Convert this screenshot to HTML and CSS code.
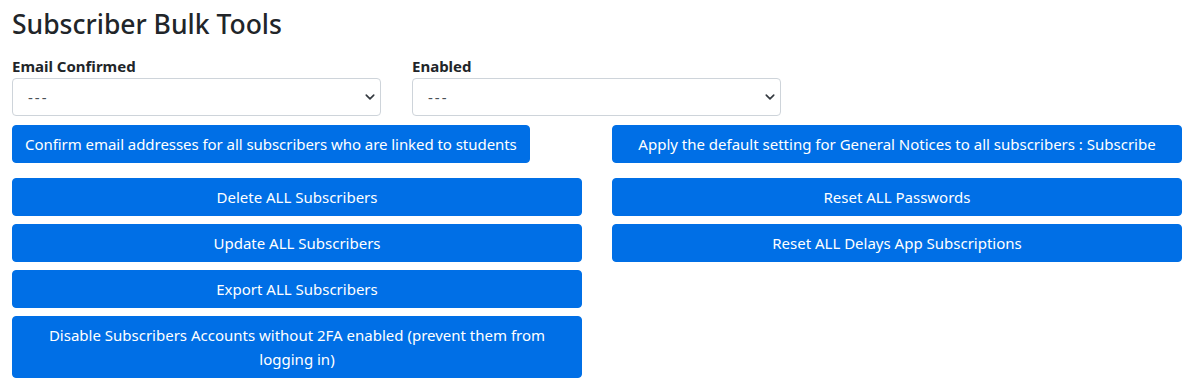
FILE: index.html
```html
<!DOCTYPE html>
<html lang="en">
<head>
    <meta charset="UTF-8">
    <title>Subscriber Bulk Tools</title>
    <link rel="stylesheet" href="styles.css">
</head>
<body>
    <div class="page">
        <h3 class="page-title">Subscriber Bulk Tools</h3>

        <div class="filters">
            <div class="field">
                <label for="email-confirmed">Email Confirmed</label>
                <div class="select-wrap">
                    <select id="email-confirmed" class="form-select">
                        <option>---</option>
                    </select>
                    <svg class="chevron" viewBox="0 0 16 16" width="10" height="10">
                        <path d="M2 5l6 6 6-6" fill="none" stroke="#343a40" stroke-width="2.6" stroke-linecap="round" stroke-linejoin="round"/>
                    </svg>
                </div>
            </div>
            <div class="field">
                <label for="enabled">Enabled</label>
                <div class="select-wrap">
                    <select id="enabled" class="form-select">
                        <option>---</option>
                    </select>
                    <svg class="chevron" viewBox="0 0 16 16" width="10" height="10">
                        <path d="M2 5l6 6 6-6" fill="none" stroke="#343a40" stroke-width="2.6" stroke-linecap="round" stroke-linejoin="round"/>
                    </svg>
                </div>
            </div>
        </div>

        <div class="tools">
            <div class="tool-col">
                <div class="top-row">
                    <button class="btn btn-inline">Confirm email addresses for all subscribers who are linked to students</button>
                </div>
                <button class="btn">Delete ALL Subscribers</button>
                <button class="btn">Update ALL Subscribers</button>
                <button class="btn">Export ALL Subscribers</button>
                <button class="btn">Disable Subscribers Accounts without 2FA enabled (prevent them from logging in)</button>
            </div>
            <div class="tool-col">
                <div class="top-row">
                    <button class="btn">Apply the default setting for General Notices to all subscribers : Subscribe</button>
                </div>
                <button class="btn">Reset ALL Passwords</button>
                <button class="btn">Reset ALL Delays App Subscriptions</button>
            </div>
        </div>
    </div>
</body>
</html>
```

FILE: styles.css
```css
* {
    margin: 0;
    padding: 0;
    box-sizing: border-box;
}

body {
    background: #fff;
    color: #212529;
    font-family: "Noto Sans", "Open Sans", sans-serif;
    font-size: 15px;
    line-height: 24px;
}

.page {
    padding: 6px 12px 0 12px;
}

.page-title {
    font-size: 26.5px;
    font-weight: 500;
    line-height: 36px;
    margin-bottom: 14px;
    color: #212529;
}

.filters {
    display: grid;
    grid-template-columns: 369px 369px;
    column-gap: 31px;
    margin-bottom: 9px;
}

.field label {
    display: block;
    font-weight: 700;
    font-size: 15px;
    line-height: 18px;
    margin-top: 1px;
    margin-bottom: 3px;
}

.select-wrap {
    position: relative;
}

.form-select {
    appearance: none;
    -webkit-appearance: none;
    width: 100%;
    height: 38px;
    padding: 6px 36px 6px 15px;
    font-family: inherit;
    font-size: 15px;
    letter-spacing: 2px;
    color: #495057;
    background: #fff;
    border: 1px solid #ced4da;
    border-radius: 4px;
}

.chevron {
    position: absolute;
    right: 6px;
    top: 14px;
    pointer-events: none;
}

.tools {
    display: grid;
    grid-template-columns: 570px 570px;
    column-gap: 30px;
}

.tool-col {
    display: flex;
    flex-direction: column;
    gap: 8px;
}

.top-row {
    display: flex;
    margin-bottom: 7px;
}

.btn {
    display: block;
    width: 100%;
    padding: 6px 12px;
    font-family: inherit;
    font-size: 15px;
    line-height: 24px;
    color: #fff;
    background: #006fe6;
    border: 1px solid #006fe6;
    border-radius: 4px;
    text-align: center;
    cursor: pointer;
}

.btn-inline {
    width: auto;
    letter-spacing: -0.05px;
}
```
